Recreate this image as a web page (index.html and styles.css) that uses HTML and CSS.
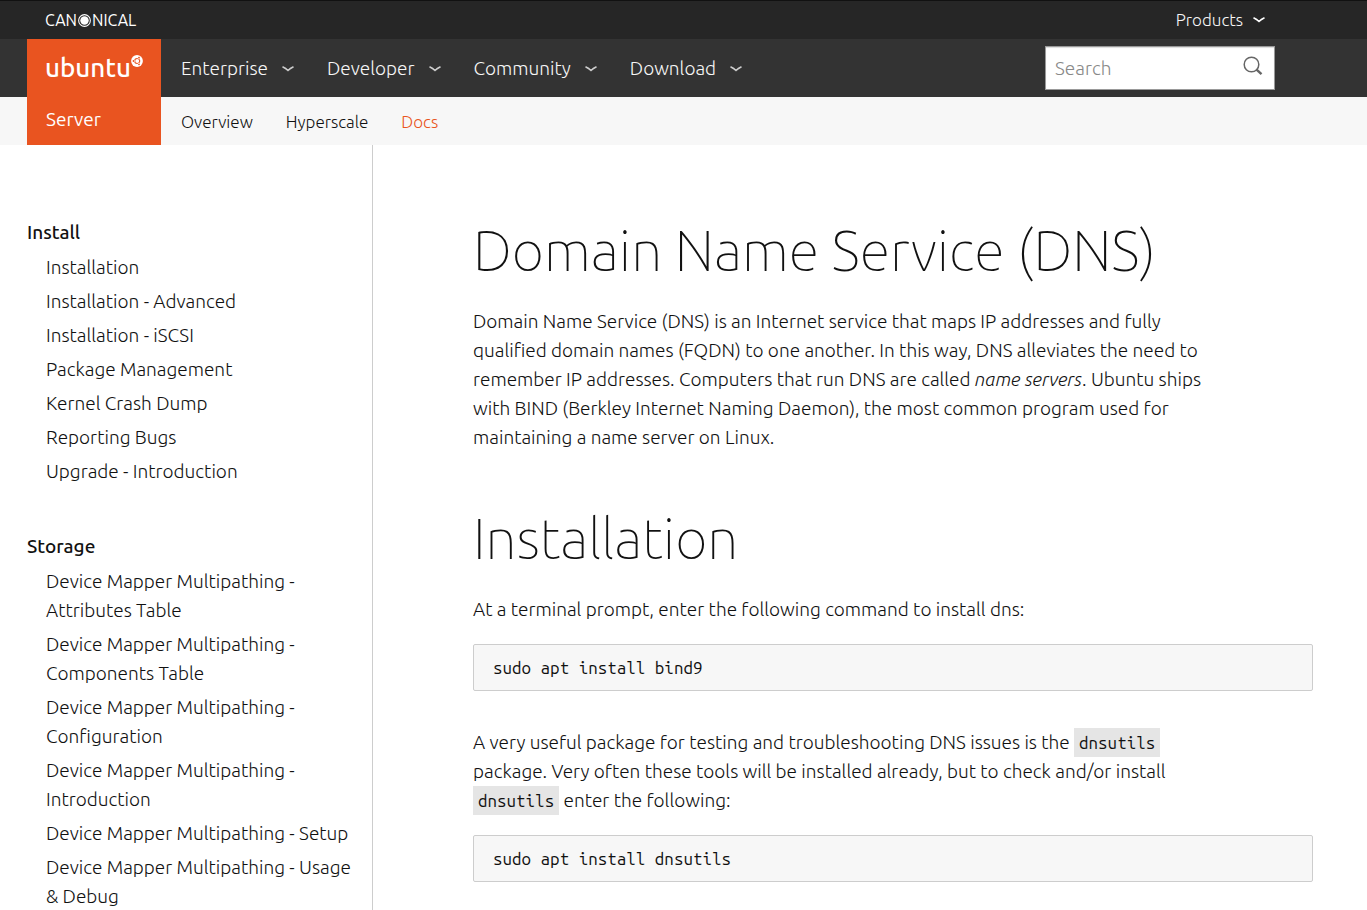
FILE: index.html
```html
<!DOCTYPE html>
<html lang="en">
<head>
<meta charset="utf-8">
<meta name="viewport" content="width=device-width, initial-scale=1">
<title>Domain Name Service (DNS) | Ubuntu Server</title>
<link rel="stylesheet" href="styles.css">
</head>
<body>
<svg class="defs" aria-hidden="true">
  <symbol id="chevron" viewBox="0 0 12 6"><path d="M.5.8C3 2 4.700 3.200 6 4.500 7.300 3.200 9 2 11.500.8" fill="none" stroke="currentColor" stroke-width="1.500"/></symbol>
</svg>

<div class="global-bar">
  <a class="canonical" href="#" aria-label="Canonical">
    <span>CAN</span><svg class="canonical-o" viewBox="0 0 12 12"><circle cx="6" cy="6" r="5.400" fill="none" stroke="#fff" stroke-width="1"/><circle cx="6" cy="6" r="3.900" fill="#fff"/></svg><span>NICAL</span>
  </a>
  <button class="menu-button products" type="button">Products <svg class="chevron"><use href="#chevron"/></svg></button>
</div>

<header class="site-header">
  <div class="brand">
    <a class="logo" href="#" aria-label="Ubuntu"><span>ubuntu</span><svg class="roundel" viewBox="0 0 12 12"><circle cx="6" cy="6" r="5.900" fill="#fff"/><circle cx="6.200" cy="6" r="2.500" fill="none" stroke="#e95420" stroke-width="1.100"/><path d="M3.600 6H2.500M7.500 3.900l.6-1.100M7.500 8.100l.6 1.100" stroke="#fff" stroke-width="2"/><circle cx="2.500" cy="6" r=".9" fill="#e95420"/><circle cx="8" cy="2.700" r=".9" fill="#e95420"/><circle cx="8" cy="9.300" r=".9" fill="#e95420"/></svg></a>
    <a class="section-name" href="#">Server</a>
  </div>
  <div class="main-bar">
    <nav class="main-nav" aria-label="Main">
      <button class="menu-button" type="button">Enterprise <svg class="chevron"><use href="#chevron"/></svg></button>
      <button class="menu-button" type="button">Developer <svg class="chevron"><use href="#chevron"/></svg></button>
      <button class="menu-button" type="button">Community <svg class="chevron"><use href="#chevron"/></svg></button>
      <button class="menu-button" type="button">Download <svg class="chevron"><use href="#chevron"/></svg></button>
    </nav>
    <form class="search">
      <input class="search-input" type="search" placeholder="Search" aria-label="Search">
      <button class="search-button" type="submit" aria-label="Submit search"><svg viewBox="0 0 20 20"><circle cx="8.500" cy="8.500" r="7.300" fill="none" stroke="#666" stroke-width="1.500"/><path d="M13.300 13.300 18.500 18.200" stroke="#666" stroke-width="2.400"/></svg></button>
    </form>
  </div>
  <nav class="sub-nav" aria-label="Server">
    <a href="#">Overview</a>
    <a href="#">Hyperscale</a>
    <a class="current" href="#">Docs</a>
  </nav>
</header>

<div class="page">
  <aside class="sidebar">
    <section class="group">
      <h2>Install</h2>
      <ul>
        <li><a href="#">Installation</a></li>
        <li><a href="#">Installation - Advanced</a></li>
        <li><a href="#">Installation - iSCSI</a></li>
        <li><a href="#">Package Management</a></li>
        <li><a href="#">Kernel Crash Dump</a></li>
        <li><a href="#">Reporting Bugs</a></li>
        <li><a href="#">Upgrade - Introduction</a></li>
      </ul>
    </section>
    <section class="group">
      <h2>Storage</h2>
      <ul>
        <li><a href="#">Device Mapper Multipathing - Attributes Table</a></li>
        <li><a href="#">Device Mapper Multipathing - Components Table</a></li>
        <li><a href="#">Device Mapper Multipathing - Configuration</a></li>
        <li><a href="#">Device Mapper Multipathing - Introduction</a></li>
        <li><a href="#">Device Mapper Multipathing - Setup</a></li>
        <li><a href="#">Device Mapper Multipathing - Usage &amp; Debug</a></li>
      </ul>
    </section>
  </aside>
  <main class="content">
    <h1>Domain Name Service (DNS)</h1>
    <p>Domain Name Service (DNS) is an Internet service that maps IP addresses and fully qualified domain names (FQDN) to one another. In this way, DNS alleviates the need to remember IP addresses. Computers that run DNS are called <em>name servers</em>. Ubuntu ships with BIND (Berkley Internet Naming Daemon), the most common program used for maintaining a name server on Linux.</p>
    <h1 class="next">Installation</h1>
    <p>At a terminal prompt, enter the following command to install dns:</p>
    <pre><code>sudo apt install bind9</code></pre>
    <p>A very useful package for testing and troubleshooting DNS issues is the <code>dnsutils</code> package. Very often these tools will be installed already, but to check and/or install <code>dnsutils</code> enter the following:</p>
    <pre><code>sudo apt install dnsutils</code></pre>
  </main>
</div>
</body>
</html>
```
FILE: styles.css
```css
* { box-sizing: border-box; }

body {
  margin: 0;
  background: #fff;
  color: #111;
  font: 300 19px/29px Ubuntu, "Noto Sans", sans-serif;
}

a { color: inherit; text-decoration: none; }
.defs { display: none; }

.global-bar {
  display: flex;
  align-items: center;
  justify-content: space-between;
  height: 39px;
  padding: 0 102px 0 45px;
  border-top: 1px solid #111;
  background: #262626;
  color: #fff;
}

.canonical {
  display: flex;
  align-items: center;
  font-size: 16px;
  font-weight: 400;
}
.canonical-o { width: 13px; height: 13px; margin: 0 1px; }

.menu-button {
  display: flex;
  align-items: center;
  gap: 14px;
  padding: 0;
  border: 0;
  background: none;
  color: #f7f7f7;
  font: inherit;
}
.products { gap: 10px; padding-bottom: 2px; font-size: 17px; }
.chevron { width: 12px; height: 6px; margin-top: 2px; color: #cdcdcd; }
.products .chevron { color: #fff; }

.site-header {
  display: grid;
  grid-template-columns: 27px 134px 1fr;
  grid-template-rows: 58px 48px;
}

.brand {
  z-index: 1;
  grid-area: 1 / 2 / 3 / 3;
  display: flex;
  flex-direction: column;
  justify-content: space-between;
  padding: 14px 18px 11px;
  background: #e95420;
  color: #fff;
  font-weight: 400;
}
.logo { display: flex; font-size: 26px; font-weight: 500; }
.roundel { flex: none; width: 12px; height: 12px; margin-top: 2px; }
.section-name { padding-left: 1px; }

.main-bar {
  grid-area: 1 / 1 / 2 / 4;
  display: flex;
  align-items: center;
  justify-content: space-between;
  padding: 0 92px 0 181px;
  background: #333;
}
.main-nav { display: flex; gap: 33px; }

.search { display: flex; width: 230px; height: 44px; border: 1px solid #999; background: #fff; box-shadow: inset 0 1px 1px #ddd; }
.search-input {
  flex: 1;
  min-width: 0;
  padding: 0 9px;
  border: 0;
  background: none;
  color: #111;
  font: inherit;
}
.search-input::placeholder { color: #888; opacity: 1; }
.search-button { padding: 0 11px 4px; border: 0; background: none; line-height: 0; }
.search-button svg { width: 20px; height: 20px; }

.sub-nav {
  grid-area: 2 / 1 / 3 / 4;
  display: flex;
  align-items: center;
  gap: 33px;
  padding: 0 92px 0 181px;
  background: #f7f7f7;
  font-size: 17px;
}
.current { color: #e95420; }

.page { display: grid; grid-template-columns: 373px minmax(0, 1fr); }

.sidebar { padding: 73px 16px 40px 27px; border-right: 1px solid #cdcdcd; }
.group { margin-bottom: 46px; }
.group h2 { margin: 0 0 6px; font-size: 19px; font-weight: 500; }
.group ul { margin: 0; padding: 0 0 0 19px; list-style: none; }
.group li { margin-bottom: 5px; }

.content { padding: 66px 54px 40px 100px; }
.content h1 { margin: 0 0 17px; font-size: 56px; line-height: 79px; font-weight: 100; }
.content h1.next { margin-top: 47px; }
.content p { max-width: 746px; margin: 0 0 20px; }

code { font: 400 17px/29px "Ubuntu Mono", "DejaVu Sans Mono", monospace; }
.content p code { padding: 5px; background: #e5e5e5; }
pre {
  margin: 0 0 37px;
  padding: 8px 19px;
  border: 1px solid #cdcdcd;
  border-radius: 2px;
  background: #f7f7f7;
}
pre code { display: block; }
```
